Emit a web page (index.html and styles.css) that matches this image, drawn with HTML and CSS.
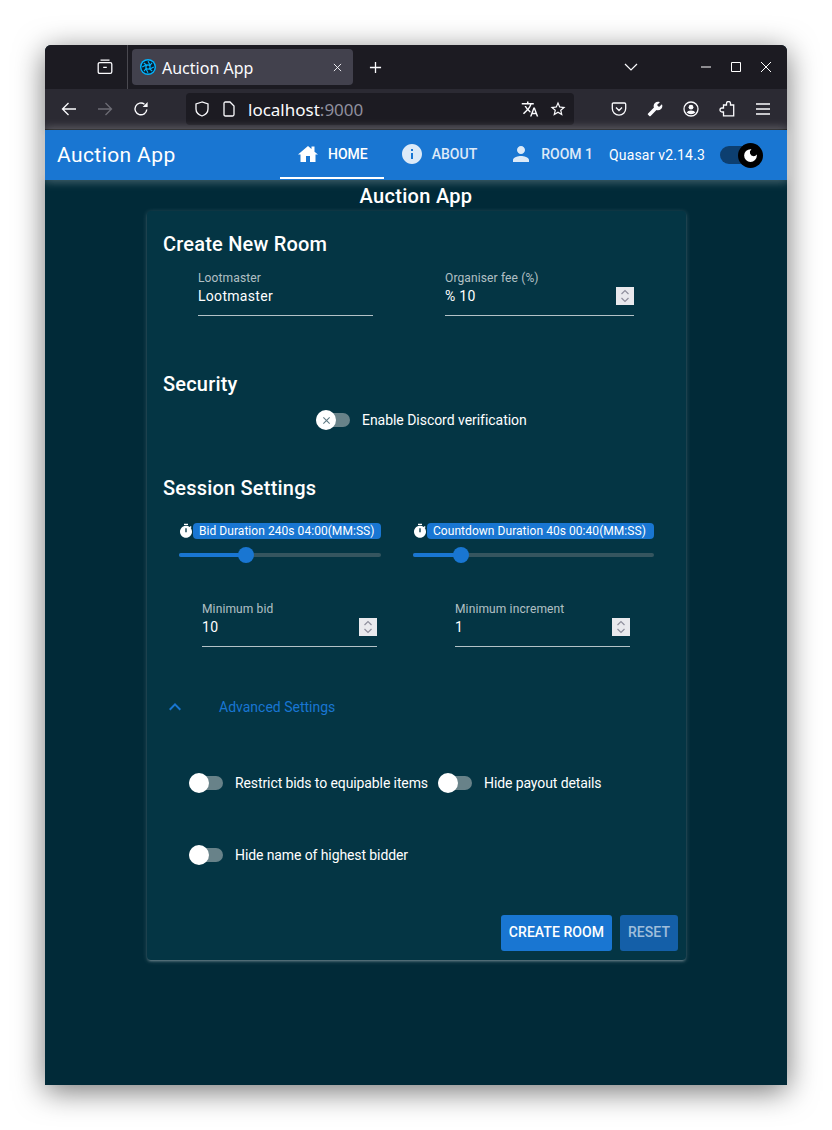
FILE: index.html
```html
<!DOCTYPE html>
<html lang="en">
<head>
    <meta charset="UTF-8">
    <meta name="viewport" content="width=device-width, initial-scale=1.0">
    <title>Auction App</title>
    <link rel="stylesheet" href="styles.css">
</head>
<body>
    <div class="window">
        <div class="tabbar">
            <svg class="tabs-list" viewBox="0 0 16 16" fill="none" stroke="#fbfbfe" stroke-width="1.3"><path d="M3.500 1.200h9M1.200 5.200q0-1.600 1.600-1.600h10.400q1.600 0 1.600 1.600v7.600q0 1.600-1.600 1.600H2.800q-1.600 0-1.600-1.600zM6.200 8.400h3.600"/></svg>
            <div class="tabs-sep"></div>
            <div class="tab">
                <svg class="favicon" viewBox="0 0 16 16"><circle cx="8" cy="8" r="8" fill="#00b4ff"/><circle cx="8" cy="8" r="6.600" fill="#0b1f2e"/><circle cx="8" cy="8" r="2.100" fill="none" stroke="#00b4ff" stroke-width="1.200"/><path d="M8 2.200 10 6M13.800 8 10 10M8 13.800 6 10M2.200 8 6 6M12 3.800 9.800 6.600M12.200 12 9.400 9.800M4 12.200 6.200 9.400M3.800 4 6.600 6.200" stroke="#00b4ff" stroke-width="1.100"/></svg>
                <span class="tab-title">Auction App</span>
                <svg class="tab-close" viewBox="0 0 10 10" stroke="#fbfbfe" stroke-width="1"><path d="M1 1l8 8M9 1l-8 8"/></svg>
            </div>
            <svg class="tab-new" viewBox="0 0 14 14" stroke="#fbfbfe" stroke-width="1.400"><path d="M7 1v12M1 7h12"/></svg>
            <svg class="tab-menu" viewBox="0 0 14 8" fill="none" stroke="#fbfbfe" stroke-width="1.200"><path d="M1 1l6 6 6-6"/></svg>
            <div class="win-btns">
                <svg viewBox="0 0 10 10" stroke="#fff" stroke-width="1"><path d="M0 5h10"/></svg>
                <svg viewBox="0 0 10 10" fill="none" stroke="#fff" stroke-width="1"><path d="M.5.5h9v9h-9z"/></svg>
                <svg viewBox="0 0 10 10" stroke="#fff" stroke-width="1"><path d="M0 0l10 10M10 0 0 10"/></svg>
            </div>
        </div>

        <div class="toolbar">
            <svg class="tool" viewBox="0 0 16 16" fill="none" stroke="#fbfbfe" stroke-width="1.300"><path d="M15 8H1.500M7.500 2 1.500 8l6 6"/></svg>
            <svg class="tool" viewBox="0 0 16 16" fill="none" stroke="#6d6c75" stroke-width="1.300"><path d="M1 8h13.500M8.500 2l6 6-6 6"/></svg>
            <svg class="tool" viewBox="0 0 16 16" fill="none" stroke="#fbfbfe" stroke-width="1.400"><path d="M13.800 8.500A5.900 5.900 0 1 1 11.500 3.200"/><path d="M14.600 1v5h-5z" fill="#fbfbfe" stroke="none"/></svg>
            <div class="urlbar">
                <svg class="url-ico" viewBox="0 0 16 16" fill="none" stroke="#fbfbfe" stroke-width="1.300"><path d="M8 1 2 3v5c0 3.500 2.500 5.800 6 7 3.500-1.200 6-3.500 6-7V3z"/></svg>
                <svg class="url-ico" viewBox="0 0 16 16" fill="none" stroke="#fbfbfe" stroke-width="1.300"><path d="M3 2.500q0-1.500 1.500-1.500H9l4 4v8.500q0 1.500-1.500 1.500h-7Q3 15 3 13.500z"/></svg>
                <span class="url-text">localhost<span class="url-port">:9000</span></span>
                <svg class="url-ico url-translate" viewBox="0 0 24 24" fill="#fbfbfe"><path d="M12.870 15.070l-2.540-2.510.03-.03c1.740-1.940 2.980-4.170 3.710-6.530H17V4h-7V2H8v2H1v1.990h11.170C11.500 7.920 10.440 9.750 9 11.350 8.070 10.320 7.300 9.190 6.690 8h-2c.73 1.630 1.730 3.170 2.980 4.560l-5.090 5.020L4 19l5-5 3.110 3.110.76-2.040zM18.500 10h-2L12 22h2l1.120-3h4.750L21 22h2l-4.500-12zm-2.620 7l1.620-4.330L19.120 17h-3.240z"/></svg>
                <svg class="url-ico url-star" viewBox="0 0 24 24" fill="#fbfbfe"><path d="M22 9.240l-7.190-.62L12 2 9.190 8.630 2 9.240l5.460 4.730L5.820 21 12 17.270 18.180 21l-1.630-7.030L22 9.240zM12 15.400l-3.760 2.270 1-4.280-3.320-2.880 4.380-.38L12 6.100l1.710 4.040 4.380.38-3.320 2.880 1 4.280L12 15.400z"/></svg>
            </div>
            <div class="tool-right">
                <svg class="tool" viewBox="0 0 16 16" fill="none" stroke="#fbfbfe" stroke-width="1.300"><path d="M2.500 2h11q1.200 0 1.200 1.200v4.300a6.700 6.700 0 0 1-13.400 0V3.200Q1.300 2 2.500 2zM5 6.500l3 3 3-3"/></svg>
                <svg class="tool" viewBox="0 0 24 24" fill="#fbfbfe"><path transform="translate(24 0) scale(-1 1)" d="M22.700 19l-9.100-9.100c.9-2.300.4-5-1.500-6.900-2-2-5-2.400-7.400-1.300L9 6 6 9 1.600 4.700C.4 7.100.9 10.100 2.900 12.100c1.900 1.900 4.600 2.400 6.900 1.500l9.100 9.100c.4.400 1 .4 1.400 0l2.300-2.300c.5-.4.5-1.100.1-1.400z"/></svg>
                <svg class="tool" viewBox="0 0 16 16" fill="none" stroke="#fbfbfe" stroke-width="1.300"><circle cx="8" cy="8" r="7"/><circle cx="8" cy="6.200" r="2.400" fill="#fbfbfe" stroke="none"/><path d="M3.600 11.500q1-2 4.400-2t4.400 2q-1.800 1.700-4.400 1.700t-4.400-1.700z" fill="#fbfbfe" stroke="none"/></svg>
                <svg class="tool" viewBox="0 0 16 16" fill="none" stroke="#fbfbfe" stroke-width="1.300"><path d="M7.500 4V2.500a2 2 0 0 1 4 0V4h3.200v10.800H4.500V11H3a2 2 0 0 1 0-4h1.500V4z"/></svg>
                <svg class="tool" viewBox="0 0 16 16" stroke="#fbfbfe" stroke-width="1.300"><path d="M1 3h14M1 8h14M1 13h14"/></svg>
            </div>
        </div>

        <header class="app-header">
            <div class="app-title">Auction App</div>
            <nav class="nav">
                <a class="nav-tab active">
                    <svg viewBox="0 0 24 24"><path d="M2 12.500 12 4l3.500 3V4.500h3v5.200l3.500 2.800h-2.500V20H14v-6h-4v6H4.500v-7.500z"/></svg>
                    <span>HOME</span>
                </a>
                <a class="nav-tab">
                    <svg viewBox="0 0 24 24"><path d="M12 2C6.480 2 2 6.480 2 12s4.480 10 10 10 10-4.480 10-10S17.520 2 12 2zm1 15h-2v-6h2v6zm0-8h-2V7h2v2z"/></svg>
                    <span>ABOUT</span>
                </a>
                <a class="nav-tab">
                    <svg viewBox="0 0 24 24"><path d="M12 12c2.210 0 4-1.790 4-4s-1.790-4-4-4-4 1.790-4 4 1.790 4 4 4zm0 2c-2.670 0-8 1.340-8 4v2h16v-2c0-2.660-5.330-4-8-4z"/></svg>
                    <span>ROOM 1</span>
                </a>
            </nav>
            <div class="version">Quasar v2.14.3</div>
            <div class="dark-toggle">
                <div class="dark-knob">
                    <svg viewBox="0 0 24 24" fill="#fff"><path d="M12 3a9 9 0 1 0 9 9c0-.46-.04-.92-.1-1.360a5.390 5.390 0 0 1-4.400 2.260 5.400 5.400 0 0 1-3.140-9.800c-.44-.06-.9-.1-1.360-.1z"/></svg>
                </div>
            </div>
        </header>

        <main class="page">
            <div class="page-title">Auction App</div>
            <section class="card">
                <h2>Create New Room</h2>
                <div class="row row-room">
                    <div class="field field-name">
                        <label>Lootmaster</label>
                        <div class="value">Lootmaster</div>
                    </div>
                    <div class="field field-fee">
                        <label>Organiser fee (%)</label>
                        <div class="value">% 10
                            <span class="spinner"><svg viewBox="0 0 17 18" fill="none" stroke="#8f8f9d" stroke-width="1.200"><path d="M5 7l3.500-3.500L12 7M5 11l3.500 3.500L12 11"/></svg></span>
                        </div>
                    </div>
                </div>

                <h2 class="h-security">Security</h2>
                <div class="toggle-row center">
                    <div class="toggle">
                        <div class="knob"><svg viewBox="0 0 10 10" stroke="#5f7a84" stroke-width="1.200"><path d="M1.500 1.500l7 7M8.500 1.500l-7 7"/></svg></div>
                    </div>
                    <span>Enable Discord verification</span>
                </div>

                <h2 class="h-session">Session Settings</h2>
                <div class="row row-sliders">
                    <div class="slider slider-bid">
                        <div class="slider-label">
                            <svg viewBox="0 0 24 24" fill="#fff"><path d="M9 1h6v2H9zM19.030 7.390l1.420-1.420c-.43-.51-.9-.99-1.410-1.410l-1.420 1.420C16.070 4.740 14.120 4 12 4c-4.970 0-9 4.030-9 9s4.020 9 9 9 9-4.030 9-9c0-2.120-.74-4.070-1.970-5.610zM13 14h-2V8h2v6z"/></svg>
                            <span class="pill">Bid Duration 240s 04:00(MM:SS)</span>
                        </div>
                        <div class="track"><div class="fill" style="width: 33.2%"><div class="thumb"></div></div></div>
                    </div>
                    <div class="slider slider-countdown">
                        <div class="slider-label">
                            <svg viewBox="0 0 24 24" fill="#fff"><path d="M9 1h6v2H9zM19.030 7.390l1.420-1.420c-.43-.51-.9-.99-1.410-1.410l-1.420 1.420C16.070 4.740 14.120 4 12 4c-4.970 0-9 4.030-9 9s4.020 9 9 9 9-4.030 9-9c0-2.120-.74-4.070-1.970-5.610zM13 14h-2V8h2v6z"/></svg>
                            <span class="pill">Countdown Duration 40s 00:40(MM:SS)</span>
                        </div>
                        <div class="track"><div class="fill" style="width: 20%"><div class="thumb"></div></div></div>
                    </div>
                </div>

                <div class="row row-mins">
                    <div class="field field-min">
                        <label>Minimum bid</label>
                        <div class="value">10
                            <span class="spinner"><svg viewBox="0 0 17 18" fill="none" stroke="#8f8f9d" stroke-width="1.200"><path d="M5 7l3.500-3.500L12 7M5 11l3.500 3.500L12 11"/></svg></span>
                        </div>
                    </div>
                    <div class="field field-min">
                        <label>Minimum increment</label>
                        <div class="value">1
                            <span class="spinner"><svg viewBox="0 0 17 18" fill="none" stroke="#8f8f9d" stroke-width="1.200"><path d="M5 7l3.500-3.500L12 7M5 11l3.500 3.500L12 11"/></svg></span>
                        </div>
                    </div>
                </div>

                <div class="advanced">
                    <svg viewBox="0 0 24 24" fill="#1976d2"><path d="M12 8l-6 6 1.410 1.410L12 10.830l4.590 4.580L18 14z"/></svg>
                    <span>Advanced Settings</span>
                </div>

                <div class="toggle-row adv-row">
                    <div class="toggle"><div class="knob"></div></div>
                    <span>Restrict bids to equipable items</span>
                    <div class="toggle toggle-second"><div class="knob"></div></div>
                    <span>Hide payout details</span>
                </div>
                <div class="toggle-row adv-row adv-row-2">
                    <div class="toggle"><div class="knob"></div></div>
                    <span>Hide name of highest bidder</span>
                </div>

                <div class="actions">
                    <button class="btn">CREATE ROOM</button>
                    <button class="btn btn-disabled">RESET</button>
                </div>
            </section>
        </main>
    </div>
</body>
</html>
```

FILE: styles.css
```css
* {
    box-sizing: border-box;
}
body {
    margin: 0;
    padding: 45px;
    height: 1130px;
    overflow: hidden;
    background-color: #fff;
    font-family: Roboto, sans-serif;
}
svg {
    display: block;
    flex: none;
}
.window {
    width: 742px;
    height: 1040px;
    display: flex;
    flex-direction: column;
    border-radius: 6px 6px 0 0;
    box-shadow: 0 6px 30px rgba(0, 0, 0, 0.55);
    background-color: #012a38;
}

/* browser chrome */
.tabbar {
    height: 44px;
    display: flex;
    align-items: center;
    background-color: #1c1b22;
    border-radius: 6px 6px 0 0;
    color: #fbfbfe;
}
.tabs-list {
    width: 16px;
    height: 16px;
    margin-left: 52px;
}
.tabs-sep {
    width: 1px;
    height: 44px;
    margin-left: 14px;
    background-color: #4a4950;
}
.tab {
    width: 221px;
    height: 36px;
    margin-left: 4px;
    padding: 0 11px 0 8px;
    display: flex;
    align-items: center;
    background-color: #42414d;
    border-radius: 4px;
}
.favicon {
    width: 16px;
    height: 16px;
}
.tab-title {
    margin-left: 6px;
    padding-top: 2px;
    font: 16px "Noto Sans", sans-serif;
}
.tab-close {
    width: 9px;
    height: 9px;
    margin-left: auto;
}
.tab-new {
    width: 13px;
    height: 13px;
    margin-left: 16px;
}
.tab-menu {
    width: 14px;
    height: 8px;
    margin-left: 242px;
}
.win-btns {
    margin-left: 63px;
    display: flex;
    gap: 20px;
}
.win-btns svg {
    width: 10px;
    height: 10px;
}
.toolbar {
    height: 41px;
    padding-left: 16px;
    display: flex;
    align-items: center;
    background-color: #2b2a33;
    border-bottom: 1px solid #0c0c0d;
}
.tool {
    width: 16px;
    height: 16px;
    margin-right: 20px;
}
.urlbar {
    flex: none;
    width: 388px;
    height: 32px;
    margin-left: 17px;
    padding-left: 8px;
    display: flex;
    align-items: center;
    background-color: #1c1b22;
    border-radius: 4px;
    color: #fbfbfe;
}
.url-ico {
    width: 16px;
    height: 16px;
    margin-right: 11px;
}
.url-text {
    padding-top: 1px;
    font: 17px "Noto Sans", sans-serif;
}
.url-port {
    color: #8f8f9d;
}
.url-translate {
    width: 18px;
    height: 18px;
    margin-left: auto;
    margin-right: 10px;
}
.url-star {
    width: 18px;
    height: 18px;
    margin-right: 7px;
}
.tool-right {
    margin-left: 37px;
    display: flex;
    align-items: center;
}

/* app header */
.app-header {
    position: relative;
    z-index: 1;
    height: 50px;
    padding-left: 12px;
    display: flex;
    align-items: center;
    background-color: #1976d2;
    color: #fff;
    box-shadow: 0 0 10px 2px rgba(255, 255, 255, 0.2), 0 0 10px rgba(255, 255, 255, 0.14);
}
.app-title {
    width: 223px;
    font-size: 21px;
    letter-spacing: 0.4px;
}
.nav {
    height: 49px;
    align-self: flex-start;
    display: flex;
}
.nav-tab {
    height: 100%;
    padding: 0 16px;
    display: flex;
    align-items: center;
    gap: 8px;
    font-size: 14px;
    font-weight: 500;
    opacity: 0.85;
    border-bottom: 2px solid transparent;
}
.nav-tab svg {
    width: 24px;
    height: 24px;
    fill: #fff;
}
.nav-tab.active {
    opacity: 1;
    border-bottom-color: #fff;
}
.version {
    width: 111px;
    font-size: 14px;
    letter-spacing: 0.17px;
}
.dark-toggle {
    position: relative;
    width: 40px;
    height: 18px;
    background-color: #0d3f70;
    border-radius: 9px;
}
.dark-knob {
    position: absolute;
    top: -3.500px;
    left: 18px;
    width: 25px;
    height: 25px;
    display: flex;
    align-items: center;
    justify-content: center;
    background-color: #000;
    border-radius: 50%;
}
.dark-knob svg {
    width: 17px;
    height: 17px;
}

/* page */
.page {
    flex: 1;
    color: #fff;
}
.page-title {
    height: 31px;
    font-size: 20px;
    font-weight: 500;
    letter-spacing: 0.3px;
    line-height: 32px;
    text-align: center;
}
.card {
    width: 539px;
    height: 749px;
    margin-left: 102px;
    padding: 17px 8px 0;
    display: flex;
    flex-direction: column;
    background-color: #043544;
    border-radius: 4px;
    box-shadow: 0 1px 5px rgba(255, 255, 255, 0.2), 0 2px 2px rgba(255, 255, 255, 0.14), 0 3px 1px -2px rgba(255, 255, 255, 0.12);
}
h2 {
    margin: 0 0 0 8px;
    font-size: 20px;
    font-weight: 500;
    letter-spacing: 0.2px;
    line-height: 32px;
}
.row {
    display: flex;
}
.field label {
    display: block;
    height: 16px;
    font-size: 12px;
    line-height: 16px;
    letter-spacing: 0.13px;
    color: rgba(255, 255, 255, 0.7);
}
.field .value {
    height: 30px;
    display: flex;
    justify-content: space-between;
    font-size: 14px;
    line-height: 20px;
    letter-spacing: 0.3px;
    border-bottom: 1px solid rgba(255, 255, 255, 0.7);
}
.spinner {
    width: 18px;
    height: 18px;
    margin-top: 1px;
    background-color: #e9e9ed;
}
.spinner svg {
    width: 18px;
    height: 18px;
}
.row-room {
    margin-top: 10px;
    padding-left: 43px;
}
.field-name {
    width: 175px;
}
.field-fee {
    width: 189px;
    margin-left: 72px;
}
.h-security {
    margin-top: 52px;
}
.toggle-row {
    height: 40px;
    display: flex;
    align-items: center;
    font-size: 14px;
    letter-spacing: -0.1px;
}
.toggle-row.center {
    padding-left: 161px;
    letter-spacing: -0.04px;
}
.toggle {
    position: relative;
    flex: none;
    width: 34px;
    height: 14px;
    margin-right: 12px;
    background-color: #688289;
    border-radius: 7px;
}
.knob {
    position: absolute;
    top: -3px;
    left: 0;
    width: 20px;
    height: 20px;
    display: flex;
    align-items: center;
    justify-content: center;
    background-color: #fff;
    border-radius: 50%;
}
.knob svg {
    width: 9px;
    height: 9px;
}
.toggle-second {
    margin-left: 10px;
}
.h-session {
    margin-top: 32px;
}
.row-sliders {
    margin-top: 19px;
    padding-left: 24px;
    gap: 32px;
}
.slider-bid {
    width: 202px;
}
.slider-countdown {
    width: 241px;
}
.slider-label {
    height: 16px;
    display: flex;
    align-items: center;
}
.slider-label svg {
    width: 16px;
    height: 16px;
    margin: 0 -1px;
}
.pill {
    flex: 1;
    height: 16px;
    padding: 0 6px;
    font-size: 12px;
    line-height: 16px;
    letter-spacing: 0.05px;
    white-space: nowrap;
    background-color: #1976d2;
    border-radius: 4px;
}
.track {
    height: 4px;
    margin-top: 14px;
    background-color: #35555f;
    border-radius: 2px;
}
.fill {
    position: relative;
    height: 4px;
    background-color: #1976d2;
    border-radius: 2px;
}
.thumb {
    position: absolute;
    top: -6px;
    right: -8px;
    width: 16px;
    height: 16px;
    background-color: #1976d2;
    border-radius: 50%;
}
.row-mins {
    margin-top: 44px;
    padding-left: 47px;
    gap: 78px;
}
.field-min {
    width: 175px;
}
.advanced {
    height: 48px;
    margin-top: 36px;
    padding-left: 8px;
    display: flex;
    align-items: center;
    gap: 32px;
    font-size: 14px;
    color: #1976d2;
}
.advanced svg {
    width: 24px;
    height: 24px;
}
.adv-row {
    margin-top: 32px;
    padding-left: 34px;
}
.actions {
    margin-top: 40px;
    display: flex;
    justify-content: flex-end;
    gap: 8px;
}
.btn {
    height: 36px;
    padding: 0 8px 2px;
    border: none;
    border-radius: 3px;
    font-family: Roboto, sans-serif;
    font-size: 14px;
    font-weight: 500;
    letter-spacing: 0.05px;
    color: #fff;
    background-color: #1976d2;
}
.btn-disabled {
    background-color: #145fa8;
    color: rgba(255, 255, 255, 0.6);
}
```
